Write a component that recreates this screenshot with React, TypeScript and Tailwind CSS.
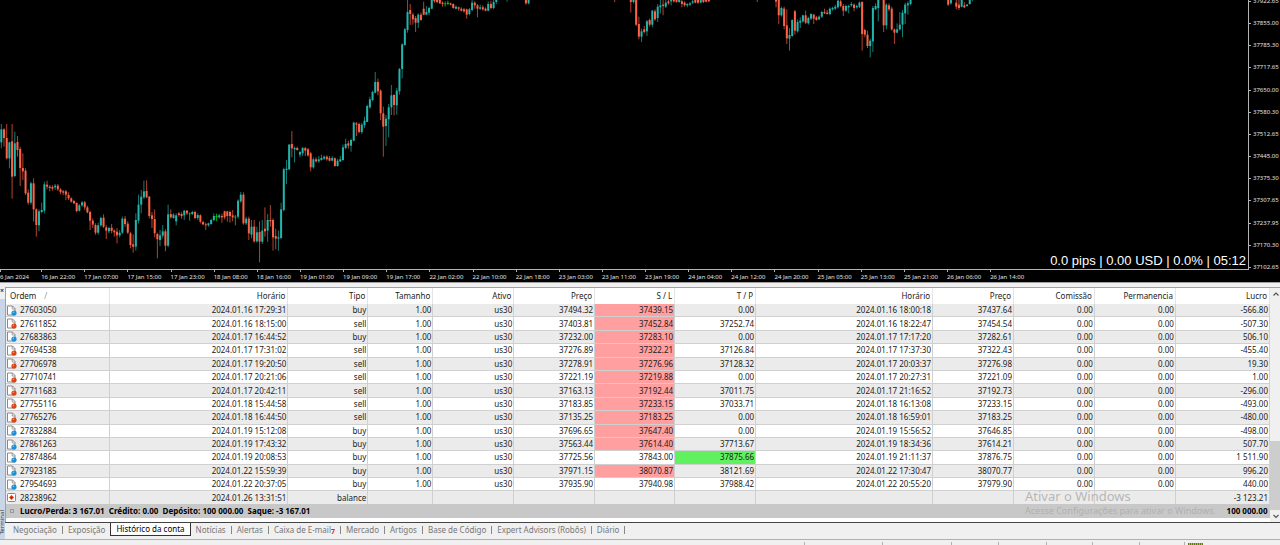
import { useState } from 'react';

// Each candle: colour letter, then high, body top, body bottom, low
const candleRuns: { start: number; candles: string }[] = [
  {
    start: 0,
    candles: `T372,388,427,445 R385,388,414,440 R372,414,475,478 T425,427,475,505 R372,424,530,596 T395,430,528,532
      R408,426,450,470 R440,447,504,558 R460,504,514,540 R505,512,580,585 R568,578,608,614 T545,550,608,614
      R535,550,628,665 R625,628,675,710 T628,634,676,694 T608,630,636,640 T545,553,632,640 R542,554,560,568
      R555,560,564,574 R556,561,566,572 T552,557,562,570 R552,557,568,573 R565,568,576,583 R570,574,578,585
      R570,574,584,600 R577,585,595,600 R592,595,605,608 R600,603,610,612 R607,609,633,637 T612,616,632,635
      T603,607,616,620 R603,607,622,630 R617,622,637,640 R632,636,662,690 R655,662,674,684 R670,675,698,704
      T668,676,698,704 T650,654,676,680 R643,653,680,684 R675,682,692,717 T680,684,694,700 R672,683,693,700
      R688,692,697,710 R684,695,706,730 T690,698,706,712 T650,656,698,702 R648,656,672,680 R664,671,698,702
      R696,700,735,745 R703,733,740,758 T640,660,740,752 T584,614,662,670 T570,590,614,640 T542,574,592,597
      R541,573,592,594 R588,590,648,655 R636,646,657,684 R628,657,700,712 R698,702,718,775 T690,706,720,738
      T675,694,707,715 R688,694,737,754 T614,643,737,742 R628,642,652,656 T640,644,654,656 T640,646,664,676
      R636,640,645,650 R637,642,648,656 T630,632,646,660 R630,632,640,645 G637,640,642,662 T632,636,642,645
      R632,636,654,657 T640,645,654,660 R643,646,665,670 R662,666,673,676 R668,673,676,690 T668,670,676,680
      T656,660,672,674 T640,648,660,664 G641,648,652,663 T641,646,652,656 R641,648,652,668 R632,634,652,658
      R633,634,648,665 R632,636,648,668 R630,646,652,664 G645,650,653,676 T598,602,650,656 T576,584,604,608
      R577,584,670,674 T650,656,670,675 R650,656,700,720 T660,680,704,715 R660,680,724,728 T680,697,724,728
      R664,696,725,787 T660,692,725,732 R622,686,694,710 T642,660,692,726 R615,660,664,680 R655,660,712,752
      R686,708,716,748 T692,712,716,752 T608,628,714,718 T503,508,630,634 T480,506,510,552 T432,434,508,510
      R393,432,445,472 T440,444,448,487 R440,444,450,452 T452,456,464,472 T441,444,460,468 R441,444,452,468
      R444,448,466,470 R456,460,502,514 T472,478,502,506 R472,478,484,488 T468,478,484,488 T464,474,480,482
      T466,470,476,480 R466,470,478,482 R468,474,482,484 T468,474,482,484 R472,475,498,500 T476,482,498,500
      T468,478,484,486 T434,442,480,482 T416,432,444,448 R422,430,437,446 T416,420,437,455 T365,368,422,424
      R366,370,374,408 R368,372,396,400 T368,374,396,402 T350,362,376,384 T314,318,366,366 T290,298,322,326
      T272,276,300,304 T216,246,278,280 R236,246,274,286 R268,272,340,360 R320,340,380,470 T345,356,378,438
      T312,322,358,412 T255,286,322,345 R283,285,315,346 T264,272,316,344 T204,207,274,284 T130,133,207,235
      T84,88,135,137 T-5,36,90,98 R12,30,42,75 R38,44,58,74 R48,54,68,96 T40,44,68,84
      R38,44,60,62 R5,26,44,46 T18,36,44,46 T20,24,38,46 T-5,-5,26,28 R-5,-5,4,8
      R-5,-5,6,10 R-5,0,10,12 R4,8,12,20 G4,10,13,20 G2,8,12,16 R8,10,14,16
      R10,12,24,26 T16,20,26,28 R20,22,26,32 R22,26,32,34 R24,28,34,38 R26,28,44,56
      T24,28,42,46 T0,8,30,34 R4,8,16,26 R12,16,26,52 T14,22,26,30 R16,22,28,32
      R22,26,32,34 T4,12,32,34 R2,12,24,28 T-5,6,24,28 T-5,-5,6,12`,
  },
  { start: 188, candles: 'T-5,-5,0,5' },
  { start: 195, candles: 'R-5,-5,10,14 T-5,0,10,13' },
  { start: 228, candles: 'R-5,-5,0,6' },
  {
    start: 234,
    candles: `R-5,-5,6,38 T-5,-5,6,10 R-5,-5,74,78 R50,72,110,118 T86,94,110,126 R78,88,96,100
      T60,64,94,108 R56,60,74,80 T30,32,74,82 R28,34,58,62 T12,20,54,66 T-5,16,22,40
      R-5,14,18,46 T0,8,20,24 R0,4,10,14 T-5,0,4,16 R-5,-5,4,8 R-5,0,6,8
      T-5,0,6,8 R0,4,12,22 R4,8,16,20 T10,12,16,22 T6,10,14,18 T0,4,8,12
      R-5,0,8,10 R-5,0,8,12 T-5,0,8,10 R-5,0,6,9 R-5,0,5,7 R-5,-5,4,6`,
  },
  { start: 281, candles: 'R-5,-5,0,6' },
  {
    start: 288,
    candles: `R-5,-5,5,22 R-5,-5,46,72 T20,24,46,50 R20,26,78,88 R28,76,115,132 T84,105,116,152
      T58,60,108,110 R30,34,92,104 T58,66,94,98 T52,62,68,84 T44,46,64,68 R32,46,68,72
      T50,54,70,74 T40,42,56,60 R42,44,56,72 R48,52,60,62 T46,50,58,60 T32,36,50,54
      R26,36,40,42 R30,38,42,44 T22,26,42,46 T20,24,28,32 T14,20,26,30 T0,2,22,26
      R-2,4,18,22 R12,18,32,48 T14,18,32,36 T14,18,22,40 T6,12,16,20 R10,14,24,34
      T14,18,22,26 T4,8,20,24 R4,6,102,152 R86,90,104,112 R92,104,138,144 T116,122,138,172
      T18,24,124,156 T10,18,28,30 T-5,-5,24,64`,
  },
  {
    start: 328,
    candles: `R-5,-5,76,96 T10,14,76,88 R10,16,28,34 R20,26,88,92 R86,88,98,132 T70,88,98,100
      T36,74,88,92 T30,38,74,112 T8,14,40,72 T4,10,16,44 T-5,-5,12,16`,
  },
  { start: 352, candles: 'R-5,-5,14,18 T-5,0,10,14' },
  {
    start: 355,
    candles: 'R0,8,20,28 R-5,14,24,30 T-5,0,20,22 R6,16,22,24 T12,14,18,20 T0,0,12,14 T-5,-5,0,4',
  },
];

const candleColors: Record<string, [string, string]> = {
  T: ['#22b5ac', '#147a74'],
  R: ['#ff6347', '#b0442f'],
  G: ['#00c800', '#00a800'],
};

const priceLabels = [
  '37922.65', '37855.00', '37785.30', '37717.65', '37650.00', '37580.30', '37512.65',
  '37445.00', '37375.30', '37307.65', '37237.95', '37170.30', '37102.65',
];

const timeLabels = [
  '6 Jan 2024', '16 Jan 22:00', '17 Jan 07:00', '17 Jan 15:00', '17 Jan 23:00', '18 Jan 08:00',
  '18 Jan 16:00', '19 Jan 01:00', '19 Jan 09:00', '19 Jan 17:00', '22 Jan 02:00', '22 Jan 10:00',
  '22 Jan 18:00', '23 Jan 03:00', '23 Jan 11:00', '23 Jan 19:00', '24 Jan 04:00', '24 Jan 12:00',
  '24 Jan 20:00', '25 Jan 05:00', '25 Jan 13:00', '25 Jan 21:00', '26 Jan 06:00', '26 Jan 14:00',
];

const columns = [
  { label: 'Ordem', width: 'w-[104px]' },
  { label: 'Horário', width: 'w-[178px]' },
  { label: 'Tipo', width: 'w-[80px]' },
  { label: 'Tamanho', width: 'w-[65px]' },
  { label: 'Ativo', width: 'w-[81px]' },
  { label: 'Preço', width: 'w-[81px]' },
  { label: 'S / L', width: 'w-[80px]' },
  { label: 'T / P', width: 'w-[81px]' },
  { label: 'Horário', width: 'w-[177px]' },
  { label: 'Preço', width: 'w-[81px]' },
  { label: 'Comissão', width: 'w-[81px]' },
  { label: 'Permanencia', width: 'w-[81px]' },
  { label: 'Lucro', width: 'w-[94px]' },
];

interface Order {
  id: string;
  opened: string;
  type: string;
  open: string;
  sl: string;
  tp: string;
  closed: string;
  close: string;
  profit: string;
  hit?: 'sl' | 'tp';
}

const orders: Order[] = [
  { id: '27603050', opened: '2024.01.16 17:29:31', type: 'buy', open: '37494.32', sl: '37439.15', tp: '0.00', closed: '2024.01.16 18:00:18', close: '37437.64', profit: '-566.80', hit: 'sl' },
  { id: '27611852', opened: '2024.01.16 18:15:00', type: 'sell', open: '37403.81', sl: '37452.84', tp: '37252.74', closed: '2024.01.16 18:22:47', close: '37454.54', profit: '-507.30', hit: 'sl' },
  { id: '27683863', opened: '2024.01.17 16:44:52', type: 'buy', open: '37232.00', sl: '37283.10', tp: '0.00', closed: '2024.01.17 17:17:20', close: '37282.61', profit: '506.10', hit: 'sl' },
  { id: '27694538', opened: '2024.01.17 17:31:02', type: 'sell', open: '37276.89', sl: '37322.21', tp: '37126.84', closed: '2024.01.17 17:37:30', close: '37322.43', profit: '-455.40', hit: 'sl' },
  { id: '27706978', opened: '2024.01.17 19:20:50', type: 'sell', open: '37278.91', sl: '37276.96', tp: '37128.32', closed: '2024.01.17 20:03:37', close: '37276.98', profit: '19.30', hit: 'sl' },
  { id: '27710741', opened: '2024.01.17 20:21:06', type: 'sell', open: '37221.19', sl: '37219.88', tp: '0.00', closed: '2024.01.17 20:27:31', close: '37221.09', profit: '1.00', hit: 'sl' },
  { id: '27711683', opened: '2024.01.17 20:42:11', type: 'sell', open: '37163.13', sl: '37192.44', tp: '37011.75', closed: '2024.01.17 21:16:52', close: '37192.73', profit: '-296.00', hit: 'sl' },
  { id: '27755116', opened: '2024.01.18 15:44:58', type: 'sell', open: '37183.85', sl: '37233.15', tp: '37033.71', closed: '2024.01.18 16:13:08', close: '37233.15', profit: '-493.00', hit: 'sl' },
  { id: '27765276', opened: '2024.01.18 16:44:50', type: 'sell', open: '37135.25', sl: '37183.25', tp: '0.00', closed: '2024.01.18 16:59:01', close: '37183.25', profit: '-480.00', hit: 'sl' },
  { id: '27832884', opened: '2024.01.19 15:12:08', type: 'buy', open: '37696.65', sl: '37647.40', tp: '0.00', closed: '2024.01.19 15:56:52', close: '37646.85', profit: '-498.00', hit: 'sl' },
  { id: '27861263', opened: '2024.01.19 17:43:32', type: 'buy', open: '37563.44', sl: '37614.40', tp: '37713.67', closed: '2024.01.19 18:34:36', close: '37614.21', profit: '507.70', hit: 'sl' },
  { id: '27874864', opened: '2024.01.19 20:08:53', type: 'buy', open: '37725.56', sl: '37843.00', tp: '37875.66', closed: '2024.01.19 21:11:37', close: '37876.75', profit: '1 511.90', hit: 'tp' },
  { id: '27923185', opened: '2024.01.22 15:59:39', type: 'buy', open: '37971.15', sl: '38070.87', tp: '38121.69', closed: '2024.01.22 17:30:47', close: '38070.77', profit: '996.20', hit: 'sl' },
  { id: '27954693', opened: '2024.01.22 20:37:05', type: 'buy', open: '37935.90', sl: '37940.98', tp: '37988.42', closed: '2024.01.22 20:55:20', close: '37979.90', profit: '440.00' },
];

const tabs = [
  'Negociação', 'Exposição', 'Histórico da conta', 'Notícias', 'Alertas', 'Caixa de E-mail',
  'Mercado', 'Artigos', 'Base de Código', 'Expert Advisors (Robôs)', 'Diário',
];

const Candles = () => (
  <svg
    className="block h-[269px] w-full"
    viewBox="0 0 3744 807"
    preserveAspectRatio="none"
    aria-hidden="true"
  >
    {candleRuns.flatMap(({ start, candles }) =>
      candles.split(/\s+/).map((candle, i) => {
        const [high, top, bottom, low] = candle.slice(1).split(',').map(Number);
        const [body, wick] = candleColors[candle[0]];
        const x = 4 + (start + i) * 8.07;
        return (
          <g key={start + i}>
            <rect x={x - 1.5} y={high} width={3} height={low - high} fill={wick} />
            <rect x={x - 3} y={top} width={6} height={Math.max(bottom - top, 3)} fill={body} />
          </g>
        );
      }),
    )}
  </svg>
);

const OrderIcon = ({ type }: { type: string }) => (
  <svg className="block size-[11px] shrink-0" viewBox="0 0 11 11" aria-hidden="true">
    {type === 'balance' ? (
      <>
        <rect x="1.5" y="1.5" width="8" height="8" rx="1" fill="#fff" stroke="#888" />
        <path d="M5.5 3 8 5.5 5.5 8 3 5.5z" fill="#e03c10" />
        <rect x="4.8" y="4.8" width="1.4" height="1.4" fill="#8a2406" />
      </>
    ) : (
      <>
        <path d="M1.5 1h5l2.5 2.5v6.5h-7.5z" fill="#fff" stroke="#888" />
        <path d="M6.2 1v3h2.8" fill="none" stroke="#888" strokeWidth="0.8" />
        <circle cx="8" cy="8" r="2.6" fill={type === 'buy' ? '#1c8fd6' : '#dd4413'} />
        <circle cx="7.4" cy="7.2" r="0.8" fill={type === 'buy' ? '#7cc8f2' : '#f59a78'} />
      </>
    )}
  </svg>
);

const App = () => {
  const [activeTab, setActiveTab] = useState('Histórico da conta');

  return (
    <div className="overflow-hidden bg-[#f0f0f0] font-['Noto_Sans',sans-serif] text-[8px] leading-3 text-[#222]">
      <section className="flex h-[283px] overflow-hidden border-b border-[#a0a0a0] bg-black text-[#e0e0e0]">
        <div className="min-w-0 flex-1">
          <div className="relative border-r border-b border-[#b4b4b4]">
            <Candles />
            <p className="absolute right-0.5 bottom-0 font-['Liberation_Sans',Arial,sans-serif] text-[13px] leading-4 text-white">
              0.0 pips | 0.00 USD | 0.0% | 05:12
            </p>
          </div>
          <div className="-ml-0.5 grid grid-cols-[repeat(29,minmax(0,1fr))] text-[6px] leading-[10px] whitespace-nowrap">
            {timeLabels.map((label) => (
              <div key={label} className="first:pl-0.5">
                <div className="h-0.5 border-l border-[#b4b4b4]" />
                {label}
              </div>
            ))}
          </div>
        </div>
        <div className="-mt-1 flex h-[277px] w-[31px] shrink-0 flex-col justify-between text-[6px] leading-[11px]">
          {priceLabels.map((label) => (
            <div key={label} className="flex items-center gap-0.5">
              <span className="h-px w-0.5 bg-[#b4b4b4]" />
              {label}
            </div>
          ))}
        </div>
      </section>

      <div className="flex pt-1">
        <aside className="flex w-[5px] shrink-0 flex-col justify-between bg-[#c9d6e8] text-[#333]">
          <span className="h-3 bg-[#f0f0f0] text-[7px] leading-[8px] font-bold">×</span>
          <span className="rotate-180 pt-1 text-[6px] leading-[5px] [writing-mode:vertical-rl]">Terminal</span>
        </aside>

        <main className="min-w-0 flex-1">
          <div className="relative flex border-t border-l border-[#a0a0a0] bg-white">
            <table className="mb-1 h-[230px] min-w-0 flex-1 table-fixed border-collapse text-right whitespace-nowrap">
              <colgroup>
                {columns.map(({ width }, i) => (
                  <col key={i} className={width} />
                ))}
              </colgroup>
              <thead>
                <tr className="h-4">
                  {columns.map(({ label }, i) => (
                    <th
                      key={i}
                      className={`border-r border-[#e5e5e5] font-normal ${i === 0 ? 'pl-1 text-left' : 'pr-0.5'}`}
                    >
                      {label}
                      {i === 0 && <span className="ml-2 text-[#999]">/</span>}
                    </th>
                  ))}
                </tr>
              </thead>
              <tbody>
                {orders.map((order) => (
                  <tr key={order.id} className="border-b border-[#d0d0d0] odd:bg-[#ebebeb] [&>td]:border-r [&>td]:border-[#d0d0d0] [&>td]:pr-px">
                    <td>
                      <div className="flex items-center gap-[3px]">
                        <OrderIcon type={order.type} />
                        {order.id}
                      </div>
                    </td>
                    <td>{order.opened}</td>
                    <td>{order.type}</td>
                    <td>1.00</td>
                    <td>us30</td>
                    <td>{order.open}</td>
                    <td className={order.hit === 'sl' ? 'bg-[#ff9f9f]' : ''}>{order.sl}</td>
                    <td className={order.hit === 'tp' ? 'bg-[#60f060]' : ''}>{order.tp}</td>
                    <td>{order.closed}</td>
                    <td>{order.close}</td>
                    <td>0.00</td>
                    <td>0.00</td>
                    <td>{order.profit}</td>
                  </tr>
                ))}
                <tr className="bg-[#ebebeb] [&>td]:border-r [&>td]:border-[#d0d0d0] [&>td]:pr-px">
                  <td>
                    <div className="flex items-center gap-[3px]">
                      <OrderIcon type="balance" />
                      28238962
                    </div>
                  </td>
                  <td>2024.01.26 13:31:51</td>
                  <td>balance</td>
                  {[3, 4, 5, 6, 7, 8, 9, 10, 11].map((i) => (
                    <td key={i} />
                  ))}
                  <td>-3 123.21</td>
                </tr>
              </tbody>
              <tfoot>
                <tr className="h-3.5 bg-[#c8c8c8] font-bold text-black">
                  <td colSpan={12} className="text-left">
                    <div className="flex items-center gap-[3px]">
                      <span className="flex w-[11px] justify-center">
                        <span className="size-1 border border-[#999]" />
                      </span>
                      <span className="whitespace-pre">
                        {'Lucro/Perda: 3 167.01  Crédito: 0.00  Depósito: 100 000.00  Saque: -3 167.01'}
                      </span>
                    </div>
                  </td>
                  <td className="pr-0.5">100 000.00</td>
                </tr>
              </tfoot>
            </table>

            <div className="flex w-2.5 shrink-0 flex-col bg-[#f0f0f0]">
              <svg className="h-3 w-full" viewBox="0 0 10 12" fill="none" stroke="#555" strokeWidth="1.2">
                <path d="M3.5 7.5 6 5l2.5 2.5" />
              </svg>
              <div className="mt-auto h-[69px] bg-[#cdcdcd]" />
              <svg className="h-3 w-full" viewBox="0 0 10 12" fill="none" stroke="#555" strokeWidth="1.2">
                <path d="M3.5 5 6 7.5 8.5 5" />
              </svg>
            </div>

            <div className="pointer-events-none absolute right-[54px] bottom-1 w-[201px] whitespace-nowrap text-[#a8a8a8]/80">
              <p className="text-[13px] leading-4">Ativar o Windows</p>
              <p className="text-[9px] leading-[14px]">Acesse Configurações para ativar o Windows.</p>
            </div>
          </div>

          <nav className="flex h-[17px] items-start border-t border-[#444] pl-[3px] text-[#777]">
            {tabs.map((tab) => (
              <button
                key={tab}
                onClick={() => setActiveTab(tab)}
                className={
                  tab === activeTab
                    ? 'h-[13px] border border-t-0 border-[#333] bg-white px-[5px] text-black'
                    : 'flex h-[13px] items-center'
                }
              >
                <span className={tab === activeTab ? '' : 'px-[5px]'}>
                  {tab}
                  {tab === 'Caixa de E-mail' && (
                    <span className="align-bottom text-[7px] leading-[8px] font-bold text-[#f02020]">7</span>
                  )}
                </span>
                {tab !== activeTab && tab !== 'Exposição' && <span className="h-2 w-px bg-[#888]" />}
              </button>
            ))}
          </nav>
        </main>
      </div>

      <footer className="flex h-1.5 items-end justify-end border-t border-[#b0b0b0] pr-[77px]">
        <div className="flex h-[3px] [&>span]:border-l [&>span]:border-[#b0b0b0]">
          <span className="w-[78px]" />
          <span className="w-[69px]" />
          <span className="w-[47px]" />
          <span className="w-12" />
          <span className="w-[46px]" />
          <span className="w-[47px]" />
          <span className="w-[45px]" />
          <span className="w-1" />
        </div>
        <div className="h-0.5 w-[15px] bg-[repeating-linear-gradient(90deg,#5d7a00_0_1px,#a5c530_1px_2px)]" />
      </footer>
    </div>
  );
};

export default App;
